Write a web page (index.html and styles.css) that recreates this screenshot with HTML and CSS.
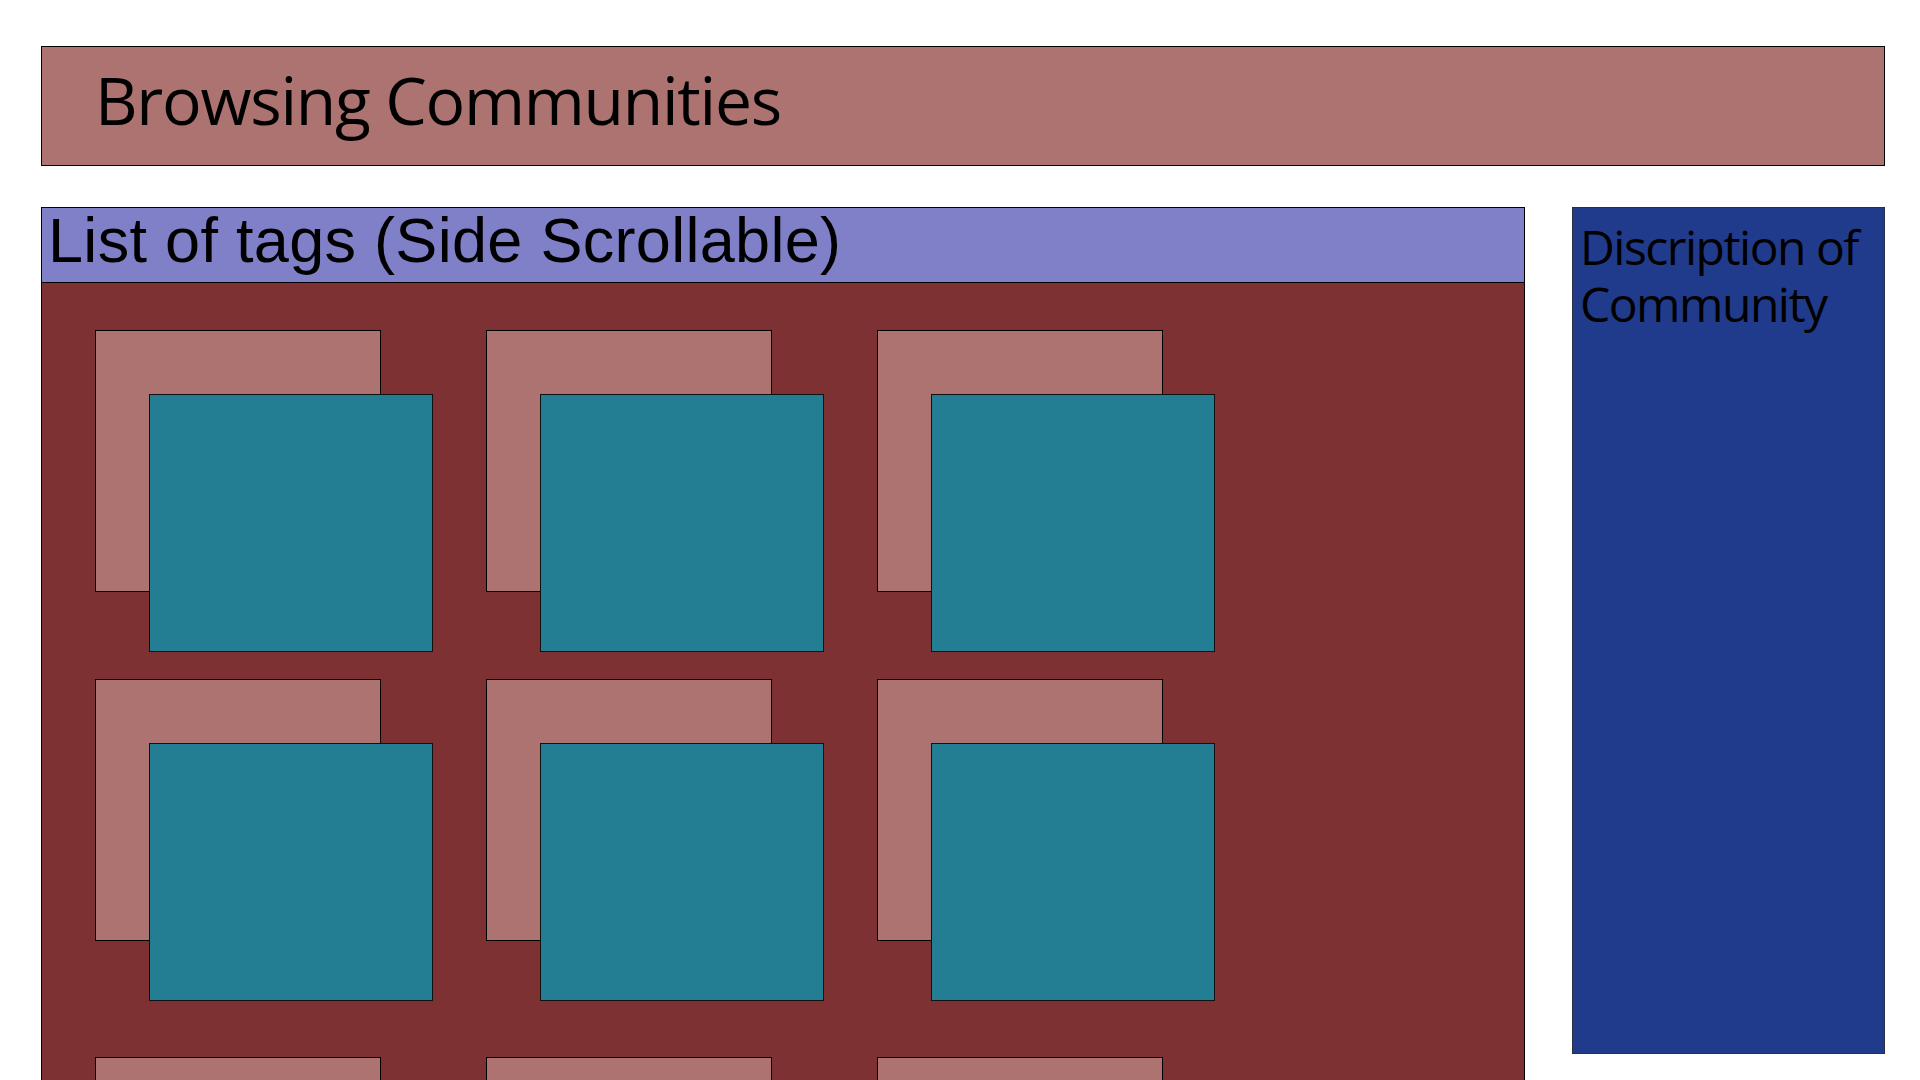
FILE: index.html
```html
<!DOCTYPE html>
<html lang="en">
<head>
<meta charset="utf-8">
<title>Browsing Communities</title>
<link rel="stylesheet" href="styles.css">
</head>
<body>
<div class="page">
  <header class="title-bar">
    <h1 class="title">Browsing Communities</h1>
  </header>
  <div class="main">
    <section class="browser">
      <div class="tags-bar">List of tags (Side Scrollable)</div>
      <div class="community-area">
        <div class="card-grid">
          <div class="card"><div class="card-back"></div><div class="card-front"></div></div>
          <div class="card"><div class="card-back"></div><div class="card-front"></div></div>
          <div class="card"><div class="card-back"></div><div class="card-front"></div></div>
          <div class="card"><div class="card-back"></div><div class="card-front"></div></div>
          <div class="card"><div class="card-back"></div><div class="card-front"></div></div>
          <div class="card"><div class="card-back"></div><div class="card-front"></div></div>
          <div class="card"><div class="card-back"></div><div class="card-front"></div></div>
          <div class="card"><div class="card-back"></div><div class="card-front"></div></div>
          <div class="card"><div class="card-back"></div><div class="card-front"></div></div>
        </div>
      </div>
    </section>
    <aside class="description">
      <p class="description-text">Discription of Community</p>
    </aside>
  </div>
</div>
</body>
</html>
```

FILE: styles.css
```css
html, body {
  margin: 0;
  padding: 0;
  overflow: hidden;
  background: #ffffff;
}

.page {
  width: 1920px;
  height: 1080px;
  box-sizing: border-box;
  padding: 46px 35px 0 41px;
}

.title-bar {
  box-sizing: border-box;
  height: 120px;
  background: #ad7371;
  border: 1px solid #000;
  padding: 12px 0 0 53px;
}

.title {
  margin: 0;
  font-family: "Open Sans", "Noto Sans", sans-serif;
  font-weight: 400;
  font-size: 66px;
  line-height: 80px;
  letter-spacing: -1.3px;
  color: #000;
}

.main {
  display: flex;
  gap: 47px;
  margin-top: 41px;
  align-items: flex-start;
}

.browser {
  width: 1484px;
  flex: none;
}

.tags-bar {
  box-sizing: border-box;
  height: 76px;
  background: #8080c9;
  border: 1px solid #000;
  padding: 0 0 0 6px;
  font-family: "Liberation Sans", Arial, sans-serif;
  font-size: 63px;
  line-height: 64px;
  letter-spacing: 0.3px;
  color: #000;
  white-space: nowrap;
}

.community-area {
  box-sizing: border-box;
  height: 1000px;
  background: #7e3133;
  border: 1px solid #000;
  border-top: none;
  padding: 47px 0 0 53px;
}

.card-grid {
  display: grid;
  grid-template-columns: repeat(3, 286px);
  grid-template-rows: 349px 378px 262px;
  column-gap: 105px;
}

.card {
  position: relative;
  width: 286px;
  height: 262px;
}

.card-back {
  box-sizing: border-box;
  width: 286px;
  height: 262px;
  background: #ad7371;
  border: 1px solid #000;
}

.card-front {
  position: absolute;
  left: 54px;
  top: 64px;
  box-sizing: border-box;
  width: 284px;
  height: 258px;
  background: #237e93;
  border: 1px solid #111;
}

.description {
  box-sizing: border-box;
  width: 313px;
  height: 847px;
  flex: none;
  background: #213b8c;
  border: 1px solid #2a2f45;
  padding: 10px 6px 0 7px;
}

.description-text {
  margin: 0;
  font-family: "Open Sans", "Noto Sans", sans-serif;
  font-size: 48px;
  line-height: 57px;
  letter-spacing: -1.5px;
  color: #000;
}
```
